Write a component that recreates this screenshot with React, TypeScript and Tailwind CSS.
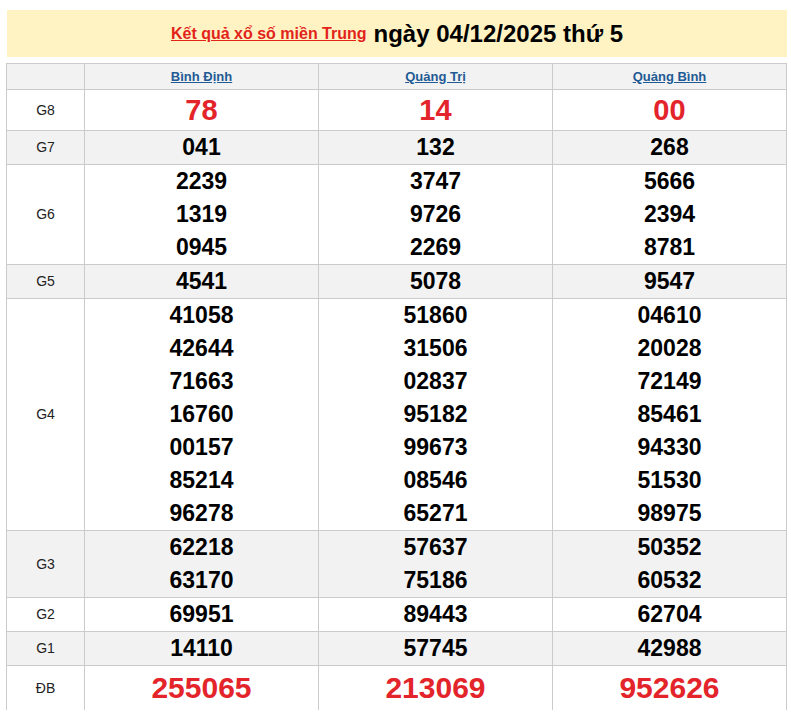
const provinces = ['Bình Định', 'Quảng Trị', 'Quảng Bình'];

type Prize = {
  label: string;
  values: string[][];
  kind?: 'g8' | 'db';
  shaded: boolean;
};

const prizes: Prize[] = [
  { label: 'G8', kind: 'g8', shaded: false, values: [['78'], ['14'], ['00']] },
  { label: 'G7', shaded: true, values: [['041'], ['132'], ['268']] },
  {
    label: 'G6',
    shaded: false,
    values: [
      ['2239', '1319', '0945'],
      ['3747', '9726', '2269'],
      ['5666', '2394', '8781'],
    ],
  },
  { label: 'G5', shaded: true, values: [['4541'], ['5078'], ['9547']] },
  {
    label: 'G4',
    shaded: false,
    values: [
      ['41058', '42644', '71663', '16760', '00157', '85214', '96278'],
      ['51860', '31506', '02837', '95182', '99673', '08546', '65271'],
      ['04610', '20028', '72149', '85461', '94330', '51530', '98975'],
    ],
  },
  {
    label: 'G3',
    shaded: true,
    values: [
      ['62218', '63170'],
      ['57637', '75186'],
      ['50352', '60532'],
    ],
  },
  { label: 'G2', shaded: false, values: [['69951'], ['89443'], ['62704']] },
  { label: 'G1', shaded: true, values: [['14110'], ['57745'], ['42988']] },
  { label: 'ĐB', kind: 'db', shaded: false, values: [['255065'], ['213069'], ['952626']] },
];

function numberClass(kind?: 'g8' | 'db') {
  if (kind === 'g8') return 'text-[29px] leading-[40px] text-[#e3242b]';
  if (kind === 'db') return 'text-[30px] leading-[44px] text-[#e3242b]';
  return 'text-[23px] leading-[33px] text-black';
}

export default function App() {
  return (
    <div className="w-[791px] h-[726px] bg-white pt-[10px] font-['Liberation_Sans',Arial,sans-serif]">
      <div className="ml-[7px] w-[780px] h-[47px] bg-[#fff3c4] flex items-center justify-center gap-[7px]">
        <a href="#" className="text-[16px] font-bold text-[#e2231a] underline">
          Kết quả xổ số miền Trung
        </a>
        <span className="text-[24px] font-bold text-black">ngày 04/12/2025 thứ 5</span>
      </div>

      <div className="mt-[6px] ml-[6px] w-[781px] border-l border-t border-[#cbcbcb]">
        <div className="flex h-[26px] bg-[#f2f2f2] border-b border-[#cbcbcb]">
          <div className="w-[78px] border-r border-[#cbcbcb]" />
          {provinces.map(p => (
            <div
              key={p}
              className="w-[234px] border-r border-[#cbcbcb] flex items-center justify-center"
            >
              <a href="#" className="text-[13px] font-bold text-[#1f5a94] underline">
                {p}
              </a>
            </div>
          ))}
        </div>

        {prizes.map((row, i) => {
          const last = i === prizes.length - 1;
          return (
            <div
              key={row.label}
              className={`flex ${row.shaded ? 'bg-[#f2f2f2]' : 'bg-white'} ${
                last ? '' : 'border-b border-[#cbcbcb]'
              }`}
            >
              <div className="w-[78px] border-r border-[#cbcbcb] flex items-center justify-center text-[14px] text-[#222]">
                {row.label}
              </div>
              {row.values.map((nums, j) => (
                <div
                  key={j}
                  className="w-[234px] border-r border-[#cbcbcb] flex flex-col items-center justify-center"
                >
                  {nums.map((n, k) => (
                    <div key={k} className={`font-bold ${numberClass(row.kind)}`}>
                      {n}
                    </div>
                  ))}
                </div>
              ))}
            </div>
          );
        })}
      </div>
    </div>
  );
}
